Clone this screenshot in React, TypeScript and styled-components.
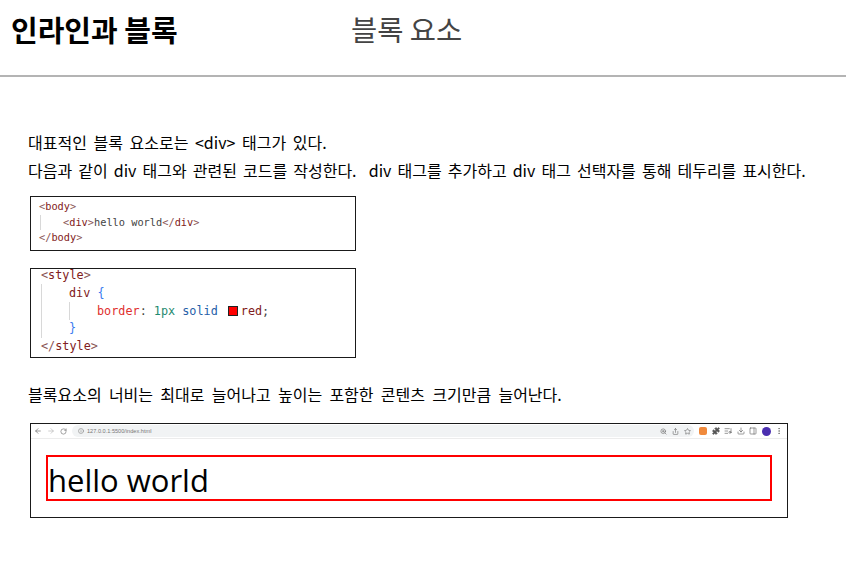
import React from "react";
import styled, { createGlobalStyle } from "styled-components";
import { ArrowLeft, ArrowRight, RotateCw, Info, ZoomIn, Share, Star, Puzzle, ListMusic, Download, PanelRight, EllipsisVertical } from "lucide-react";

const GlobalStyle = createGlobalStyle`
  html, body {
    margin: 0;
    padding: 0;
    background: #fff;
  }
  body {
    font-family: "Noto Sans CJK KR", "Noto Sans", sans-serif;
    color: #000;
  }
`;

const Header = styled.header`
  display: flex;
  align-items: center;
  height: 77px;
  padding-left: 11px;
  padding-bottom: 18px;
  box-sizing: border-box;
  border-bottom: 2px solid #b4b4b4;
`;

const Title = styled.h1`
  width: 340px;
  margin: 0;
  font-size: 29px;
  line-height: 36px;
  font-weight: 700;
  color: #000;
`;

const SubTitle = styled.h2`
  margin: 0;
  font-size: 28.5px;
  line-height: 36px;
  font-weight: 400;
  color: #444;
`;

const Content = styled.main`
  display: flex;
  flex-direction: column;
  padding: 51px 0 0 28px;
`;

const Text = styled.p<{ $gap?: number; $spacing: number }>`
  margin: 0 0 ${(p) => p.$gap ?? 0}px;
  font-size: 16px;
  line-height: 28px;
  white-space: pre;
  word-spacing: ${(p) => p.$spacing}px;
`;

const CodeBox = styled.div<{ $height: number; $size: number; $gap: number }>`
  box-sizing: border-box;
  width: 326px;
  height: ${(p) => p.$height}px;
  margin: 0 0 ${(p) => p.$gap}px 2px;
  border: 1px solid #1a1a1a;
  font-family: "DejaVu Sans Mono", monospace;
  font-size: ${(p) => p.$size}px;
  overflow: hidden;
`;

const CodeLine = styled.div<{ $height: number; $indent: number }>`
  position: relative;
  height: ${(p) => p.$height}px;
  line-height: ${(p) => p.$height}px;
  padding-left: ${(p) => p.$indent}px;
  white-space: pre;
  color: #444;
`;

const Guide = styled.span<{ $left: number }>`
  position: absolute;
  left: ${(p) => p.$left}px;
  top: 0;
  bottom: 0;
  width: 1px;
  background: #d8d8d8;
`;

const Tag = styled.span`
  color: #7f2020;
`;

const Bracket = styled.span`
  color: #8a5555;
`;

const Property = styled.span`
  color: #e03030;
`;

const Value = styled.span`
  color: #2560a8;
`;

const Num = styled.span`
  color: #1f8a70;
`;

const Brace = styled.span`
  color: #3a7af0;
`;

const Swatch = styled.span`
  display: inline-block;
  box-sizing: border-box;
  width: 10px;
  height: 10px;
  margin: 0 3px 0 10px;
  background: #f00;
  border: 1px solid #222;
  vertical-align: -1px;
`;

const BrowserShot = styled.div`
  box-sizing: border-box;
  width: 758px;
  height: 95px;
  margin-left: 2px;
  border: 1px solid #1a1a1a;
  display: flex;
  flex-direction: column;
`;

const BrowserBar = styled.div`
  display: flex;
  align-items: center;
  flex: none;
  height: 14px;
  padding: 0 4px 0 3px;
  border-bottom: 1px solid #ececec;
  color: #666;
`;

const NavGroup = styled.div`
  display: flex;
  align-items: center;
  gap: 5px;
  margin-right: 5px;
`;

const Address = styled.div`
  display: flex;
  align-items: center;
  justify-content: space-between;
  flex: 1;
  height: 12px;
  padding: 0 3px 0 6px;
  border-radius: 6px;
  background: #f1f3f4;
`;

const Url = styled.span`
  display: flex;
  align-items: center;
  gap: 3px;
  font-family: "Liberation Sans", sans-serif;
  font-size: 5.6px;
  color: #777;
`;

const IconRow = styled.div<{ $gap: number }>`
  display: flex;
  align-items: center;
  gap: ${(p) => p.$gap}px;
`;

const Extensions = styled.div`
  display: flex;
  align-items: center;
  gap: 4.5px;
  margin-left: 5px;
`;

const OrangeIcon = styled.span`
  width: 8px;
  height: 8px;
  border-radius: 2px;
  background: #f08a3c;
`;

const Avatar = styled.span`
  width: 9px;
  height: 9px;
  border-radius: 50%;
  background: #4b2fb0;
`;

const BrowserBody = styled.div`
  flex: 1;
  padding: 16px 15px 0;
`;

const HelloBox = styled.div`
  box-sizing: border-box;
  height: 46px;
  border: 2px solid #f00;
  font-family: "Open Sans", sans-serif;
  font-size: 31px;
  line-height: 46px;
  color: #000;
`;

export default function App() {
  return (
    <>
      <GlobalStyle />
      <Header>
        <Title>인라인과 블록</Title>
        <SubTitle>블록 요소</SubTitle>
      </Header>
      <Content>
        <Text $spacing={3}>대표적인 블록 요소로는 &lt;div&gt; 태그가 있다.</Text>
        <Text $spacing={2.5} $gap={12}>다음과 같이 div 태그와 관련된 코드를 작성한다.  div 태그를 추가하고 div 태그 선택자를 통해 테두리를 표시한다.</Text>
        <CodeBox $height={55} $size={10.3} $gap={17}>
          <CodeLine $height={15.5} $indent={8} style={{ marginTop: 2 }}>
            <Bracket>&lt;</Bracket><Tag>body</Tag><Bracket>&gt;</Bracket>
          </CodeLine>
          <CodeLine $height={15.5} $indent={32}>
            <Guide $left={9} />
            <Bracket>&lt;</Bracket><Tag>div</Tag><Bracket>&gt;</Bracket>hello world<Bracket>&lt;/</Bracket><Tag>div</Tag><Bracket>&gt;</Bracket>
          </CodeLine>
          <CodeLine $height={15.5} $indent={8}>
            <Bracket>&lt;/</Bracket><Tag>body</Tag><Bracket>&gt;</Bracket>
          </CodeLine>
        </CodeBox>
        <CodeBox $height={90} $size={11.8} $gap={22}>
          <CodeLine $height={17} $indent={10} style={{ marginTop: -2 }}>
            <Bracket>&lt;</Bracket><Tag>style</Tag><Bracket>&gt;</Bracket>
          </CodeLine>
          <CodeLine $height={18} $indent={38}>
            <Guide $left={10} />
            <Tag>div</Tag> <Brace>{"{"}</Brace>
          </CodeLine>
          <CodeLine $height={18} $indent={66}>
            <Guide $left={10} />
            <Guide $left={38} />
            <Property>border</Property>: <Num>1px</Num> <Value>solid</Value>
            <Swatch />
            <Tag>red</Tag>;
          </CodeLine>
          <CodeLine $height={17.5} $indent={38}>
            <Guide $left={10} />
            <Brace>{"}"}</Brace>
          </CodeLine>
          <CodeLine $height={17.5} $indent={10}>
            <Bracket>&lt;/</Bracket><Tag>style</Tag><Bracket>&gt;</Bracket>
          </CodeLine>
        </CodeBox>
        <Text $spacing={3.7} $gap={15}>블록요소의 너비는 최대로 늘어나고 높이는 포함한 콘텐츠 크기만큼 늘어난다.</Text>
        <BrowserShot>
          <BrowserBar>
            <NavGroup>
              <ArrowLeft size={8} />
              <ArrowRight size={8} color="#b5b5b5" />
              <RotateCw size={7} />
            </NavGroup>
            <Address>
              <Url>
                <Info size={6} />
                127.0.0.1:5500/index.html
              </Url>
              <IconRow $gap={5}>
                <ZoomIn size={7} />
                <Share size={7} />
                <Star size={7} />
              </IconRow>
            </Address>
            <Extensions>
              <OrangeIcon />
              <Puzzle size={8} fill="#555" />
              <ListMusic size={8} />
              <Download size={8} />
              <PanelRight size={8} />
              <Avatar />
              <EllipsisVertical size={8} />
            </Extensions>
          </BrowserBar>
          <BrowserBody>
            <HelloBox>hello world</HelloBox>
          </BrowserBody>
        </BrowserShot>
      </Content>
    </>
  );
}
